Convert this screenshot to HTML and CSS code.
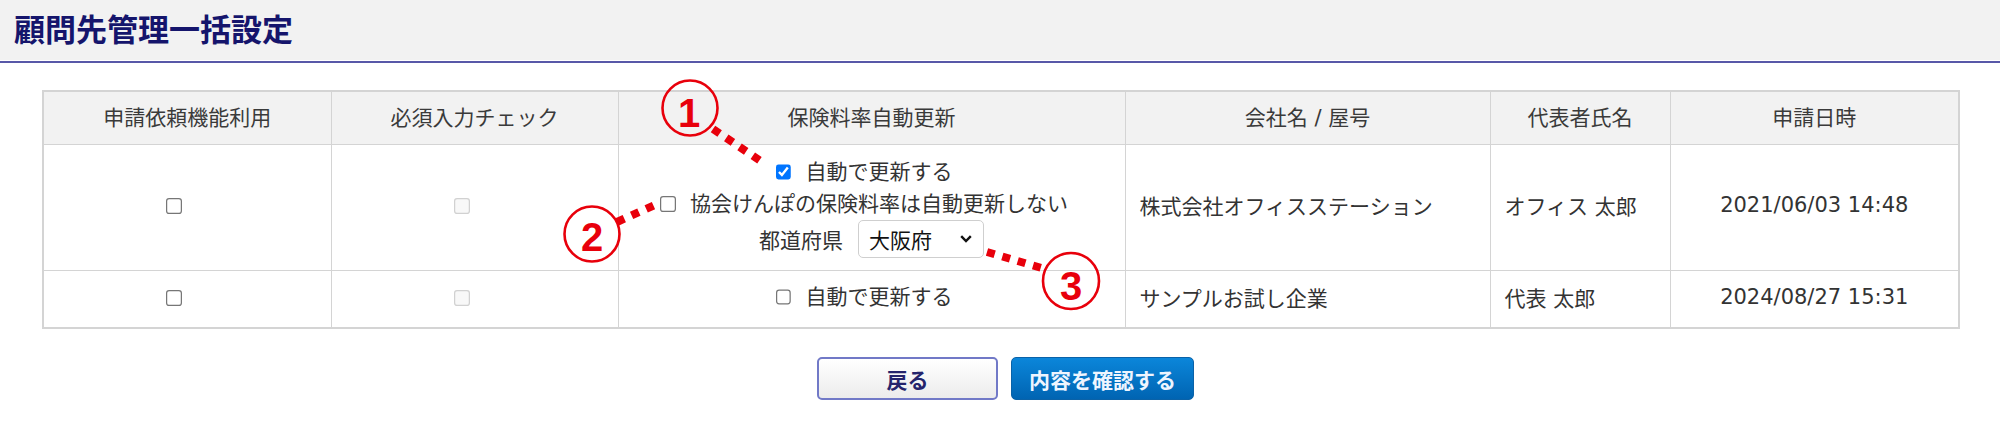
FILE: index.html
```html
<!DOCTYPE html>
<html lang="ja">
<head>
<meta charset="utf-8">
<title>顧問先管理一括設定</title>
<link rel="stylesheet" href="styles.css">
</head>
<body>
<div class="page">
  <header class="titlebar">
    <h1 class="title">顧問先管理一括設定</h1>
  </header>
  <main class="content">
    <table class="grid">
      <colgroup>
        <col class="c1"><col class="c2"><col class="c3"><col class="c4"><col class="c5"><col class="c6">
      </colgroup>
      <thead>
        <tr>
          <th>申請依頼機能利用</th>
          <th>必須入力チェック</th>
          <th>保険料率自動更新</th>
          <th>会社名 / 屋号</th>
          <th>代表者氏名</th>
          <th>申請日時</th>
        </tr>
      </thead>
      <tbody>
        <tr class="r1">
          <td class="center"><input type="checkbox" class="cb shift"></td>
          <td class="center"><input type="checkbox" class="cb shift" disabled></td>
          <td class="center">
            <div class="stack">
              <label class="opt"><input type="checkbox" class="cb" checked><span>自動で更新する</span></label>
              <label class="opt"><input type="checkbox" class="cb"><span>協会けんぽの保険料率は自動更新しない</span></label>
              <div class="pref">
                <span>都道府県</span>
                <span class="selectwrap">
                  <select class="sel"><option>大阪府</option></select>
                  <svg class="chev" viewBox="0 0 12 8"><polyline points="1.2,1.2 6,6 10.8,1.2" fill="none" stroke="#111" stroke-width="2.4"/></svg>
                </span>
              </div>
            </div>
          </td>
          <td class="left">株式会社オフィスステーション</td>
          <td class="left">オフィス 太郎</td>
          <td class="center">2021/06/03 14:48</td>
        </tr>
        <tr class="r2">
          <td class="center"><input type="checkbox" class="cb shift"></td>
          <td class="center"><input type="checkbox" class="cb shift" disabled></td>
          <td class="center">
            <label class="opt"><input type="checkbox" class="cb"><span>自動で更新する</span></label>
          </td>
          <td class="left">サンプルお試し企業</td>
          <td class="left">代表 太郎</td>
          <td class="center">2024/08/27 15:31</td>
        </tr>
      </tbody>
    </table>
    <div class="actions">
      <button class="btn btn-back" type="button">戻る</button>
      <button class="btn btn-confirm" type="button">内容を確認する</button>
    </div>
  </main>
  <svg class="anno" viewBox="0 0 2000 433" width="2000" height="433">
    <g class="dots">
      <line x1="713" y1="129" x2="765" y2="164"/>
      <line x1="617" y1="222" x2="657" y2="204"/>
      <line x1="987" y1="252" x2="1045" y2="269"/>
    </g>
    <g class="rings">
      <circle cx="690" cy="108" r="27.5"/>
      <circle cx="592" cy="234" r="27.5"/>
      <circle cx="1071" cy="281" r="28"/>
    </g>
    <g class="nums">
      <text x="689" y="127">1</text>
      <text x="592" y="251">2</text>
      <text x="1071" y="300">3</text>
    </g>
  </svg>
</div>
</body>
</html>
```

FILE: styles.css
```css
* { box-sizing: border-box; }

html, body {
  margin: 0;
  padding: 0;
  background: #fff;
}

body {
  font-family: "DejaVu Sans", "Noto Sans CJK JP", sans-serif;
  font-size: 21px;
  color: #333;
}

.page {
  position: relative;
  width: 2000px;
  height: 433px;
  overflow: hidden;
}

.titlebar {
  height: 63px;
  background: #f2f2f2;
  border-bottom: 2px solid #5858a8;
  box-shadow: inset 0 -1px 0 #fff;
  display: flex;
  align-items: center;
  padding: 0 0 7px 14px;
}

.title {
  margin: 0;
  font-family: "Noto Sans CJK JP", sans-serif;
  font-size: 31px;
  line-height: 1;
  font-weight: 700;
  color: #15156c;
}

.content {
  padding: 27px 42px 0 42px;
}

.grid {
  width: 100%;
  border-collapse: collapse;
  table-layout: fixed;
  border: 2px solid #d4d4d4;
}

.c1 { width: 288px; }
.c2 { width: 287px; }
.c3 { width: 507px; }
.c4 { width: 365px; }
.c5 { width: 180px; }
.c6 { width: 289px; }

.grid th,
.grid td {
  border: 1px solid #d4d4d4;
  padding: 0 14px 4px 14px;
  vertical-align: middle;
}

.grid th {
  background: #f2f2f2;
  font-weight: 400;
  color: #3a3a3a;
  height: 53px;
  text-align: center;
}

.r1 td { height: 126px; }
.r2 td { height: 58px; }

.center { text-align: center; }
.left { text-align: left; }

.cb {
  width: 13px;
  height: 13px;
  margin: 0;
  zoom: 1.23;
  vertical-align: middle;
}

.shift { margin-right: 21px; }

.stack {
  display: flex;
  flex-direction: column;
  align-items: center;
  margin-top: 4px;
}

.opt {
  display: inline-flex;
  align-items: center;
  gap: 14px;
  line-height: 32px;
  padding-right: 15px;
  color: #333;
}

.pref {
  display: flex;
  align-items: center;
  gap: 15px;
  height: 38px;
}

.selectwrap {
  position: relative;
  display: inline-block;
  height: 38px;
}

.sel {
  -webkit-appearance: none;
  appearance: none;
  width: 126px;
  height: 38px;
  border: 1px solid #cfcfcf;
  border-radius: 5px;
  background: #fff;
  font-family: "Noto Sans CJK JP", sans-serif;
  font-size: 21px;
  color: #111;
  padding: 0 0 0 10px;
}

.chev {
  position: absolute;
  right: 12px;
  top: 15px;
  width: 12px;
  height: 8px;
  pointer-events: none;
}

.actions {
  display: flex;
  justify-content: center;
  gap: 13px;
  padding: 28px 0 0 11px;
}

.btn {
  height: 43px;
  border-radius: 5px;
  font-family: "Noto Sans CJK JP", sans-serif;
  font-size: 21px;
  font-weight: 700;
  display: flex;
  align-items: center;
  justify-content: center;
  padding: 0;
  cursor: pointer;
}

.btn-back {
  width: 181px;
  border: 2px solid #7179c7;
  background: linear-gradient(#ffffff, #ececec);
  color: #24246c;
}

.btn-confirm {
  width: 183px;
  border: 1px solid #0a62a8;
  background: linear-gradient(#0b86da, #0064b2);
  color: #eef5ff;
}

.anno {
  position: absolute;
  left: 0;
  top: 0;
  pointer-events: none;
}

.dots line {
  stroke: #e8000b;
  stroke-width: 8;
  stroke-dasharray: 8 8;
}

.rings circle {
  fill: none;
  stroke: #e8000b;
  stroke-width: 2.6;
}

.nums text {
  font-family: "Liberation Sans", sans-serif;
  font-weight: 700;
  font-size: 40px;
  fill: #e8000b;
  text-anchor: middle;
}
```
